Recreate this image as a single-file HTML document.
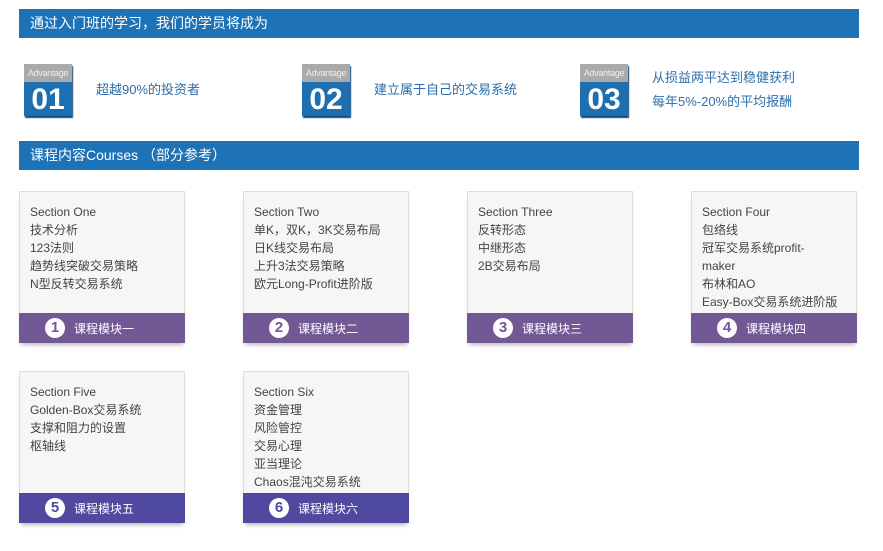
<!DOCTYPE html>
<html><head><meta charset="utf-8"><style>
*{margin:0;padding:0;box-sizing:border-box}
body{width:883px;height:551px;background:#fff;font-family:"Liberation Sans","Noto Sans CJK SC",sans-serif;position:relative;overflow:hidden}
.bar{position:absolute;left:19px;width:840px;height:29px;background:#1e72b6;color:#fff;font-size:14px;line-height:29px;padding-left:11px}
.adv{position:absolute;top:64px;width:48px;height:52px;box-shadow:1px 2px 1px #0d4a80}
.adv .t{height:18px;background:#aaa;color:#eee;font-size:9px;letter-spacing:-0.3px;text-align:center;line-height:18px;overflow:hidden;white-space:nowrap}
.adv .n{height:34px;background:#1e6fb0;color:#fff;font-size:30px;font-weight:bold;text-align:center;line-height:36px}
.at{position:absolute;color:#2c6eaa;font-size:13px;line-height:24px}
.card{position:absolute;width:166px;height:152px;background:#f6f6f6;border:1px solid #ddd;box-shadow:0 4px 4px -2px #bbb}
.card .b{padding:11px 0 0 10px;font-size:12px;color:#444;line-height:18px}
.card .f{position:absolute;left:-1px;right:-1px;bottom:-1px;height:30px;background:#735896;color:#fff;font-size:12px;display:flex;align-items:center;padding-left:26px}
.card.p2 .f{background:#5049a0}
.f i{display:block;width:20px;height:20px;border-radius:50%;background:#fff;color:#735896;font-style:normal;font-weight:bold;font-size:15px;text-align:center;line-height:20px;margin-right:9px}
.p2 .f i{color:#5049a0}
</style></head><body>
<div class="bar" style="top:9px">通过入门班的学习，我们的学员将成为</div>
<div class="adv" style="left:24px"><div class="t">Advantage</div><div class="n">01</div></div>
<div class="at" style="left:96px;top:78px">超越90%的投资者</div>
<div class="adv" style="left:302px"><div class="t">Advantage</div><div class="n">02</div></div>
<div class="at" style="left:374px;top:78px">建立属于自己的交易系统</div>
<div class="adv" style="left:580px"><div class="t">Advantage</div><div class="n">03</div></div>
<div class="at" style="left:652px;top:66px">从损益两平达到稳健获利<br>每年5%-20%的平均报酬</div>
<div class="bar" style="top:141px">课程内容Courses （部分参考）</div>

<div class="card" style="left:19px;top:191px"><div class="b">Section One<br>技术分析<br>123法则<br>趋势线突破交易策略<br>N型反转交易系统</div><div class="f"><i>1</i>课程模块一</div></div>
<div class="card" style="left:243px;top:191px"><div class="b">Section Two<br>单K，双K，3K交易布局<br>日K线交易布局<br>上升3法交易策略<br>欧元Long-Profit进阶版</div><div class="f"><i>2</i>课程模块二</div></div>
<div class="card" style="left:467px;top:191px"><div class="b">Section Three<br>反转形态<br>中继形态<br>2B交易布局</div><div class="f"><i>3</i>课程模块三</div></div>
<div class="card" style="left:691px;top:191px"><div class="b">Section Four<br>包络线<br>冠军交易系统profit-<br>maker<br>布林和AO<br>Easy-Box交易系统进阶版</div><div class="f"><i>4</i>课程模块四</div></div>
<div class="card p2" style="left:19px;top:371px"><div class="b">Section Five<br>Golden-Box交易系统<br>支撑和阻力的设置<br>枢轴线</div><div class="f"><i>5</i>课程模块五</div></div>
<div class="card p2" style="left:243px;top:371px"><div class="b">Section Six<br>资金管理<br>风险管控<br>交易心理<br>亚当理论<br>Chaos混沌交易系统</div><div class="f"><i>6</i>课程模块六</div></div>
</body></html>
